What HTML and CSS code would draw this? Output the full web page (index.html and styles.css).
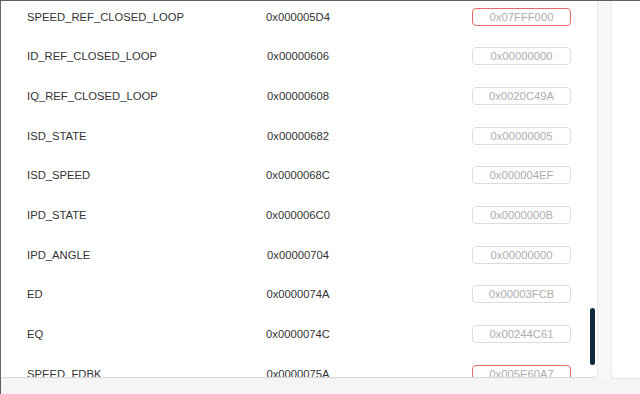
FILE: index.html
```html
<!DOCTYPE html>
<html lang="en">

<head>
    <meta charset="utf-8">
    <meta name="viewport" content="width=device-width, initial-scale=1.0">
    <title>Registers</title>
    <link rel="stylesheet" href="styles.css">
</head>

<body>
    <div class="frame">
        <div class="panel">
            <div class="list">
                <div class="row">
                    <span class="name">SPEED_REF_CLOSED_LOOP</span>
                    <span class="addr">0x000005D4</span>
                    <input class="val bad" placeholder="0x07FFF000">
                </div>
                <div class="row">
                    <span class="name">ID_REF_CLOSED_LOOP</span>
                    <span class="addr">0x00000606</span>
                    <input class="val" placeholder="0x00000000">
                </div>
                <div class="row">
                    <span class="name">IQ_REF_CLOSED_LOOP</span>
                    <span class="addr">0x00000608</span>
                    <input class="val" placeholder="0x0020C49A">
                </div>
                <div class="row">
                    <span class="name">ISD_STATE</span>
                    <span class="addr">0x00000682</span>
                    <input class="val" placeholder="0x00000005">
                </div>
                <div class="row">
                    <span class="name">ISD_SPEED</span>
                    <span class="addr">0x0000068C</span>
                    <input class="val" placeholder="0x000004EF">
                </div>
                <div class="row">
                    <span class="name">IPD_STATE</span>
                    <span class="addr">0x000006C0</span>
                    <input class="val" placeholder="0x0000000B">
                </div>
                <div class="row">
                    <span class="name">IPD_ANGLE</span>
                    <span class="addr">0x00000704</span>
                    <input class="val" placeholder="0x00000000">
                </div>
                <div class="row">
                    <span class="name">ED</span>
                    <span class="addr">0x0000074A</span>
                    <input class="val" placeholder="0x00003FCB">
                </div>
                <div class="row">
                    <span class="name">EQ</span>
                    <span class="addr">0x0000074C</span>
                    <input class="val" placeholder="0x00244C61">
                </div>
                <div class="row">
                    <span class="name">SPEED_FDBK</span>
                    <span class="addr">0x0000075A</span>
                    <input class="val bad" placeholder="0x005E60A7">
                </div>
            </div>
            <div class="thumb"></div>
        </div>
        <div class="gutter"></div>
        <div class="side"></div>
    </div>
</body>

</html>
```

FILE: styles.css
```css
body {
    margin: 0;
    background-color: #f5f5f5;
    font-family: 'Liberation Sans', Arial, sans-serif;
}

.frame {
    display: flex;
    height: 393px;
    border-top: 1px solid #5e5e5e;
    border-left: 1px solid #5e5e5e;
}

.panel {
    position: relative;
    width: 596px;
    height: 376px;
    background-color: #fff;
    overflow: hidden;
    border-bottom-right-radius: 4px;
    box-shadow: 0 1px 1px #d6d6d6;
}

.list {
    margin-top: -4px;
}

.row {
    display: grid;
    grid-template-columns: 211px 120px auto;
    align-items: center;
    height: 39.67px;
    padding-left: 26px;
    font-size: 11.25px;
    color: #333;
}

.name {
    white-space: nowrap;
}

.addr {
    text-align: center;
}

.val {
    justify-self: start;
    margin-left: 114px;
    width: 99px;
    height: 18px;
    box-sizing: border-box;
    border: 1px solid #dcdcdc;
    border-radius: 4px;
    padding: 0;
    text-align: center;
    font-family: 'Liberation Sans', Arial, sans-serif;
    font-size: 11.25px;
    outline: none;
}

.val::placeholder {
    color: #adadad;
}

.val.bad {
    border-color: #e8676b;
}

.thumb {
    position: absolute;
    left: 589px;
    top: 307px;
    width: 5px;
    height: 57px;
    border-radius: 3px;
    background-color: #0d2b3a;
}

.gutter {
    width: 15px;
    height: 378px;
    background-color: #f7f7f7;
    border-left: 1px solid #ececec;
    border-right: 1px solid #ececec;
    box-sizing: border-box;
}

.side {
    flex: 1;
    height: 377px;
    background-color: #fff;
    border-bottom-left-radius: 4px;
    box-shadow: 0 1px 1px #e0e0e0;
}
```
